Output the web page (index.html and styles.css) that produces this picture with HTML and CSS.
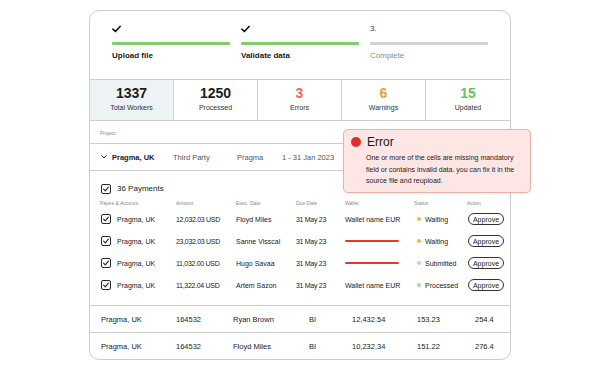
FILE: index.html
```html
<!DOCTYPE html>
<html>
<head>
<meta charset="utf-8">
<link rel="stylesheet" href="styles.css">
</head>
<body>
<div class="card">
  <div class="steps">
    <div class="step">
      <div class="step-top"><svg class="tick" viewBox="0 0 10 8" width="9" height="8"><path d="M1 4.2 L3.8 6.8 L9 1.2" fill="none" stroke="#111" stroke-width="1.8" stroke-linecap="round" stroke-linejoin="round"/></svg></div>
      <div class="bar bar-done"></div>
      <div class="step-label">Upload file</div>
    </div>
    <div class="step">
      <div class="step-top"><svg class="tick" viewBox="0 0 10 8" width="9" height="8"><path d="M1 4.2 L3.8 6.8 L9 1.2" fill="none" stroke="#111" stroke-width="1.8" stroke-linecap="round" stroke-linejoin="round"/></svg></div>
      <div class="bar bar-done"></div>
      <div class="step-label">Validate data</div>
    </div>
    <div class="step">
      <div class="step-top step-num">3.</div>
      <div class="bar"></div>
      <div class="step-label step-muted">Complete</div>
    </div>
  </div>

  <div class="stats">
    <div class="stat stat-active"><div class="num">1337</div><div class="lbl">Total Workers</div></div>
    <div class="stat"><div class="num">1250</div><div class="lbl">Processed</div></div>
    <div class="stat"><div class="num num-err">3</div><div class="lbl">Errors</div></div>
    <div class="stat"><div class="num num-warn">6</div><div class="lbl">Warnings</div></div>
    <div class="stat"><div class="num num-ok">15</div><div class="lbl">Updated</div></div>
  </div>

  <div class="project-label">Project</div>
  <div class="project-row">
    <span class="chev"><svg viewBox="0 0 6 4" width="6" height="4"><path d="M0.8 0.8 L3 3 L5.2 0.8" fill="none" stroke="#333" stroke-width="1" stroke-linecap="round"/></svg></span>
    <span class="pname">Pragma, UK</span>
    <span>Third Party</span>
    <span>Pragma</span>
    <span>1 - 31 Jan 2023</span>
  </div>

  <div class="payments">
    <div class="payments-head">
      <span class="cb"><svg viewBox="0 0 8 8" width="8" height="8"><path d="M1.6 4.2 L3.3 5.8 L6.4 2.2" fill="none" stroke="#222" stroke-width="1.1" stroke-linecap="round" stroke-linejoin="round"/></svg></span>
      <span>36 Payments</span>
    </div>
    <div class="ptable">
      <div class="th">Payee &amp; Account</div><div class="th">Amount</div><div class="th">Exec. Date</div><div class="th">Due Date</div><div class="th">Wallet</div><div class="th">Status</div><div class="th">Action</div>

      <div class="td payee"><span class="cb"><svg viewBox="0 0 8 8" width="8" height="8"><path d="M1.6 4.2 L3.3 5.8 L6.4 2.2" fill="none" stroke="#222" stroke-width="1.1" stroke-linecap="round" stroke-linejoin="round"/></svg></span>Pragma, UK</div>
      <div class="td amt">12,032.03 USD</div><div class="td">Floyd Miles</div><div class="td amt">31 May 23</div><div class="td">Wallet name EUR</div>
      <div class="td status"><span class="dot dot-wait"></span>Waiting</div><div class="td"><span class="btn">Approve</span></div>

      <div class="td payee"><span class="cb"><svg viewBox="0 0 8 8" width="8" height="8"><path d="M1.6 4.2 L3.3 5.8 L6.4 2.2" fill="none" stroke="#222" stroke-width="1.1" stroke-linecap="round" stroke-linejoin="round"/></svg></span>Pragma, UK</div>
      <div class="td amt">23,032.03 USD</div><div class="td">Sanne Visscal</div><div class="td amt">31 May 23</div><div class="td"><span class="redline"></span></div>
      <div class="td status"><span class="dot dot-wait"></span>Waiting</div><div class="td"><span class="btn">Approve</span></div>

      <div class="td payee"><span class="cb"><svg viewBox="0 0 8 8" width="8" height="8"><path d="M1.6 4.2 L3.3 5.8 L6.4 2.2" fill="none" stroke="#222" stroke-width="1.1" stroke-linecap="round" stroke-linejoin="round"/></svg></span>Pragma, UK</div>
      <div class="td amt">11,032.00 USD</div><div class="td">Hugo Savaa</div><div class="td amt">31 May 23</div><div class="td"><span class="redline"></span></div>
      <div class="td status"><span class="dot dot-sub"></span>Submitted</div><div class="td"><span class="btn">Approve</span></div>

      <div class="td payee"><span class="cb"><svg viewBox="0 0 8 8" width="8" height="8"><path d="M1.6 4.2 L3.3 5.8 L6.4 2.2" fill="none" stroke="#222" stroke-width="1.1" stroke-linecap="round" stroke-linejoin="round"/></svg></span>Pragma, UK</div>
      <div class="td amt">11,322.04 USD</div><div class="td">Artem Sazon</div><div class="td amt">31 May 23</div><div class="td">Wallet name EUR</div>
      <div class="td status"><span class="dot dot-proc"></span>Processed</div><div class="td"><span class="btn">Approve</span></div>
    </div>
  </div>

  <div class="srow">
    <span>Pragma, UK</span><span>164532</span><span>Ryan Brown</span><span>BI</span><span>12,432.54</span><span>153.23</span><span>254.4</span>
  </div>
  <div class="srow">
    <span>Pragma, UK</span><span>164532</span><span>Floyd Miles</span><span>BI</span><span>10,232.34</span><span>151.22</span><span>276.4</span>
  </div>

  <div class="error-pop">
    <div class="err-head"><span class="err-dot"></span><span class="err-title">Error</span></div>
    <div class="err-text">One or more of the cells are missing mandatory<br>field or contains invalid data. you can fix it in the<br>source file and reupload.</div>
  </div>
</div>
</body>
</html>
```

FILE: styles.css
```css
* { box-sizing: border-box; }
html, body { margin: 0; padding: 0; background: #fff; }
body {
  font-family: "Liberation Sans", Arial, sans-serif;
  color: #1c1c1c;
  width: 600px;
  height: 370px;
  overflow: hidden;
}

.card {
  position: relative;
  margin: 10px 0 0 89px;
  width: 422px;
  height: 350px;
  border: 1px solid #cdcdcd;
  border-radius: 10px;
  display: flex;
  flex-direction: column;
}

/* steps */
.steps {
  height: 68px;
  display: flex;
  gap: 11px;
  padding: 12px 0 0 22px;
}
.step { width: 118px; display: flex; flex-direction: column; }
.step-top { height: 11px; display: flex; align-items: center; }
.step-num { font-size: 8px; color: #444; }
.bar { height: 3px; margin-top: 8px; background: #d3d3d3; border-radius: 1px; }
.bar-done { background: #7dcf6c; }
.step-label { margin-top: 6px; font-size: 8px; line-height: 10px; font-weight: bold; color: #1a1a1a; }
.step-muted { font-weight: normal; color: #8a8a8a; }

/* stats */
.stats {
  height: 42px;
  display: grid;
  grid-template-columns: repeat(5, 1fr);
  border-top: 1px solid #cdcdcd;
  border-bottom: 1px solid #cdcdcd;
}
.stat {
  display: flex;
  flex-direction: column;
  align-items: center;
  padding-top: 6px;
  border-right: 1px solid #d4d4d4;
}
.stat:last-child { border-right: none; }
.stat-active { background: #edf2f4; }
.num { font-size: 14px; line-height: 15px; font-weight: bold; color: #1d1d1d; }
.num-err { color: #ec6b5d; }
.num-warn { color: #e3a23c; }
.num-ok { color: #6cc25b; }
.lbl { font-size: 7px; line-height: 9px; margin-top: 2px; color: #333; }

/* project */
.project-label {
  height: 23px;
  padding: 9px 0 0 10px;
  font-size: 5px;
  color: #8a8a8a;
  border-bottom: 1px solid #cdcdcd;
}
.project-row {
  height: 27px;
  border-bottom: 1px solid #cdcdcd;
  display: grid;
  grid-template-columns: 12px 61px 64px 45px auto;
  align-items: center;
  padding-left: 10px;
  font-size: 7.5px;
  color: #555;
}
.chev { display: flex; align-items: center; padding-left: 1px; }
.pname { font-weight: bold; color: #1a1a1a; }

/* payments */
.payments { height: 134px; }
.payments-head {
  height: 26px;
  padding: 10px 0 0 11px;
  display: flex;
  align-items: center;
  gap: 6px;
  font-size: 8px;
  line-height: 12px;
}
.cb {
  width: 10px;
  height: 10px;
  border: 1.1px solid #2a2a2a;
  border-radius: 2px;
  display: inline-flex;
  align-items: center;
  justify-content: center;
  flex: none;
}
.ptable {
  display: grid;
  grid-template-columns: 76px 60px 60px 49px 69px 53px auto;
  grid-template-rows: 11px repeat(4, 22px);
  padding-left: 10px;
  align-items: center;
}
.th { font-size: 5px; color: #8a8a8a; }
.td { font-size: 7px; color: #222; display: flex; align-items: center; }
.payee { gap: 6px; padding-left: 1px; }
.amt { letter-spacing: -0.3px; }
.redline { display: block; width: 54px; height: 2.5px; background: #e23a2c; border-radius: 1px; }
.status { gap: 4px; padding-left: 3px; }
.dot { width: 4px; height: 4px; border-radius: 50%; flex: none; }
.dot-wait { background: #ebb84b; }
.dot-sub { background: #f3bcc4; }
.dot-proc { background: #a5da8c; }
.btn {
  display: inline-flex;
  align-items: center;
  justify-content: center;
  width: 36px;
  height: 12px;
  border: 1px solid #333;
  border-radius: 7px;
  font-size: 7px;
  color: #222;
  margin-left: 1px;
}

/* summary rows */
.srow {
  height: 27px;
  border-top: 1px solid #cdcdcd;
  display: grid;
  grid-template-columns: 75px 57px 76px 43px 65px 58px auto;
  align-items: center;
  padding-left: 11px;
  font-size: 7.5px;
  color: #222;
}

/* error popover */
.error-pop {
  position: absolute;
  left: 253px;
  top: 118px;
  width: 188px;
  height: 64px;
  background: #fde6e3;
  border: 1px solid #e8b2ac;
  border-radius: 5px;
  box-shadow: 0 1px 3px rgba(0, 0, 0, 0.08);
  padding: 5px 0 0 7px;
}
.err-head { display: flex; align-items: center; gap: 6px; height: 14px; }
.err-dot { width: 10px; height: 10px; border-radius: 50%; background: #e1302a; flex: none; }
.err-title { font-size: 12px; line-height: 14px; font-weight: 500; color: #1a1a1a; }
.err-text {
  margin-top: 3px;
  padding-left: 15px;
  font-size: 7px;
  line-height: 11.5px;
  color: #222;
  white-space: nowrap;
}
```
